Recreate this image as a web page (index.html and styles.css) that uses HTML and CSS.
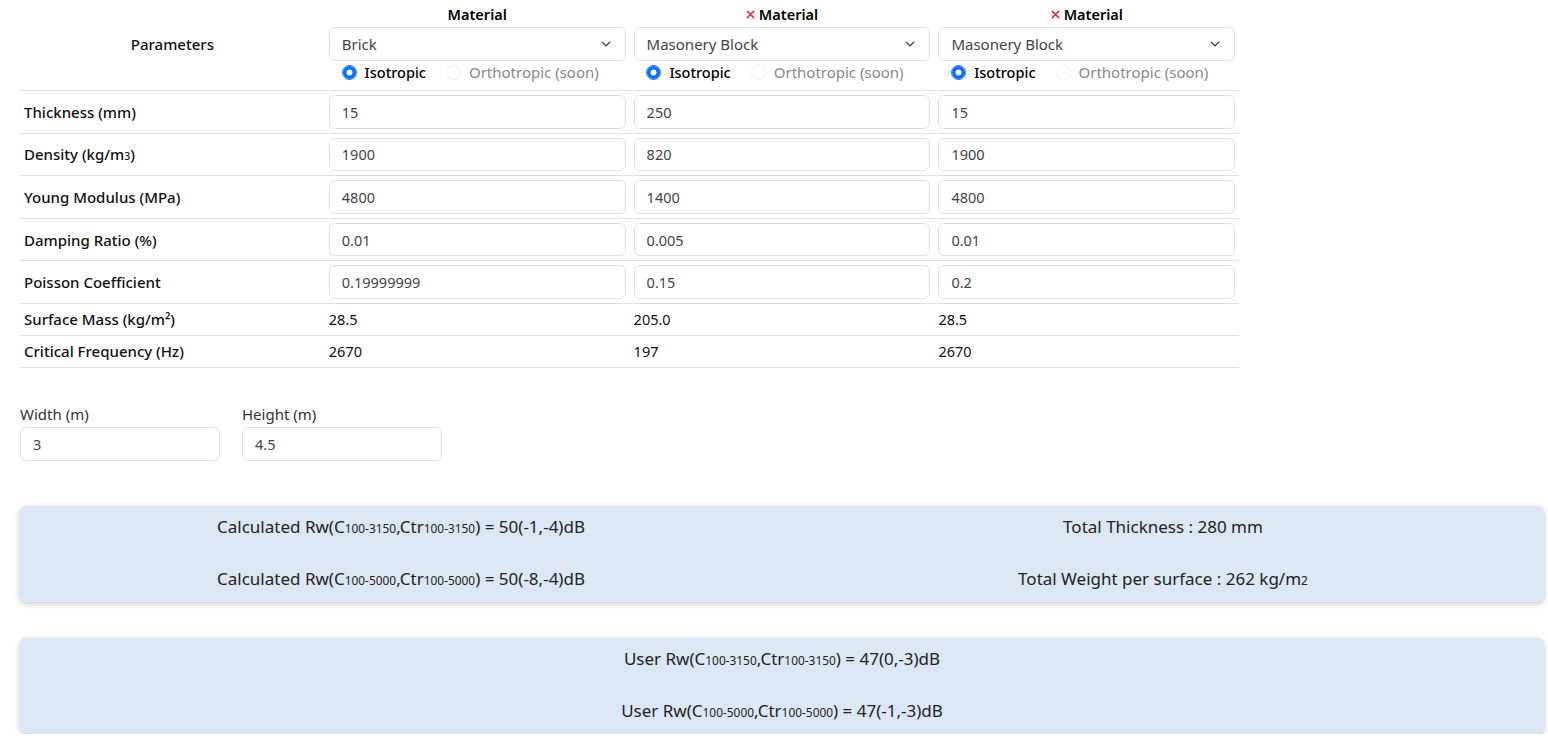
FILE: index.html
```html
<!DOCTYPE html>
<html>
<head>
<meta charset="utf-8">
<link rel="stylesheet" href="styles.css">
</head>
<body>
<div class="page">
  <table class="params">
    <tbody>
      <tr class="head-row">
        <td class="label-cell center">Parameters</td>
        <td>
          <div class="mat-title">Material</div>
          <div class="select-wrap">
            <select class="sel"><option>Brick</option></select>
            <svg class="chev" width="10" height="10" viewBox="0 0 16 16"><path d="M2 5l6 6 6-6" fill="none" stroke="#343a40" stroke-width="2.2" stroke-linecap="round" stroke-linejoin="round"/></svg>
          </div>
          <div class="radios">
            <label class="rad"><span class="dot on"></span>Isotropic</label>
            <label class="rad off"><span class="dot"></span>Orthotropic (soon)</label>
          </div>
        </td>
        <td>
          <div class="mat-title"><svg class="x" width="9" height="9" viewBox="0 0 10 10"><path d="M1.5 1.5l7 7M8.5 1.5l-7 7" stroke="#dc3545" stroke-width="1.8" stroke-linecap="round"/></svg>Material</div>
          <div class="select-wrap">
            <select class="sel"><option>Masonery Block</option></select>
            <svg class="chev" width="10" height="10" viewBox="0 0 16 16"><path d="M2 5l6 6 6-6" fill="none" stroke="#343a40" stroke-width="2.2" stroke-linecap="round" stroke-linejoin="round"/></svg>
          </div>
          <div class="radios">
            <label class="rad"><span class="dot on"></span>Isotropic</label>
            <label class="rad off"><span class="dot"></span>Orthotropic (soon)</label>
          </div>
        </td>
        <td>
          <div class="mat-title"><svg class="x" width="9" height="9" viewBox="0 0 10 10"><path d="M1.5 1.5l7 7M8.5 1.5l-7 7" stroke="#dc3545" stroke-width="1.8" stroke-linecap="round"/></svg>Material</div>
          <div class="select-wrap">
            <select class="sel"><option>Masonery Block</option></select>
            <svg class="chev" width="10" height="10" viewBox="0 0 16 16"><path d="M2 5l6 6 6-6" fill="none" stroke="#343a40" stroke-width="2.2" stroke-linecap="round" stroke-linejoin="round"/></svg>
          </div>
          <div class="radios">
            <label class="rad"><span class="dot on"></span>Isotropic</label>
            <label class="rad off"><span class="dot"></span>Orthotropic (soon)</label>
          </div>
        </td>
      </tr>
      <tr>
        <td class="label-cell">Thickness (mm)</td>
        <td><input class="inp" value="15"></td>
        <td><input class="inp" value="250"></td>
        <td><input class="inp" value="15"></td>
      </tr>
      <tr>
        <td class="label-cell">Density (kg/m<sub class="lo">3</sub>)</td>
        <td><input class="inp" value="1900"></td>
        <td><input class="inp" value="820"></td>
        <td><input class="inp" value="1900"></td>
      </tr>
      <tr>
        <td class="label-cell">Young Modulus (MPa)</td>
        <td><input class="inp" value="4800"></td>
        <td><input class="inp" value="1400"></td>
        <td><input class="inp" value="4800"></td>
      </tr>
      <tr>
        <td class="label-cell">Damping Ratio (%)</td>
        <td><input class="inp" value="0.01"></td>
        <td><input class="inp" value="0.005"></td>
        <td><input class="inp" value="0.01"></td>
      </tr>
      <tr>
        <td class="label-cell">Poisson Coefficient</td>
        <td><input class="inp" value="0.19999999"></td>
        <td><input class="inp" value="0.15"></td>
        <td><input class="inp" value="0.2"></td>
      </tr>
      <tr class="text-row">
        <td class="label-cell">Surface Mass (kg/m²)</td>
        <td>28.5</td>
        <td>205.0</td>
        <td>28.5</td>
      </tr>
      <tr class="text-row">
        <td class="label-cell">Critical Frequency (Hz)</td>
        <td>2670</td>
        <td>197</td>
        <td>2670</td>
      </tr>
    </tbody>
  </table>

  <div class="dims">
    <div class="dim">
      <label class="dim-label">Width (m)</label>
      <input class="inp" value="3">
    </div>
    <div class="dim">
      <label class="dim-label">Height (m)</label>
      <input class="inp" value="4.5">
    </div>
  </div>

  <div class="result two">
    <div class="col">
      <p>Calculated Rw(C<sub class="lo">100-3150</sub>,Ctr<sub class="lo">100-3150</sub>) = 50(-1,-4)dB</p>
      <p>Calculated Rw(C<sub class="lo">100-5000</sub>,Ctr<sub class="lo">100-5000</sub>) = 50(-8,-4)dB</p>
    </div>
    <div class="col">
      <p>Total Thickness : 280 mm</p>
      <p>Total Weight per surface : 262 kg/m<sub class="lo">2</sub></p>
    </div>
  </div>

  <div class="result one">
    <div class="col">
      <p>User Rw(C<sub class="lo">100-3150</sub>,Ctr<sub class="lo">100-3150</sub>) = 47(0,-3)dB</p>
      <p>User Rw(C<sub class="lo">100-5000</sub>,Ctr<sub class="lo">100-5000</sub>) = 47(-1,-3)dB</p>
    </div>
  </div>
</div>
</body>
</html>
```

FILE: styles.css
```css
* { box-sizing: border-box; }
html, body { margin: 0; padding: 0; background: #fff; }
body {
  font-family: "Noto Sans", "Open Sans", sans-serif;
  font-size: 15px;
  color: #212529;
}
.page { padding: 0 4px 0 20px; }

.params {
  width: 80%;
  border-collapse: collapse;
  table-layout: fixed;
}
.params td {
  padding: 4px;
  border-bottom: 1px solid #dee2e6;
  vertical-align: middle;
  width: 25%;
  font-size: 14.5px;
  font-weight: 400;
  color: #111;
}
.params td.label-cell {
  font-weight: 500;
  font-size: 15px;
  color: #111;
}
.params td.center { text-align: center; }
.params .head-row td { padding-top: 4px; padding-bottom: 7px; }
.params .text-row td { padding: 4px; line-height: 23px; }

.mat-title {
  display: flex;
  justify-content: center;
  align-items: center;
  gap: 4px;
  font-weight: 600;
  font-size: 14.5px;
  line-height: 20px;
  margin-bottom: 3px;
  color: #000;
}

.select-wrap { position: relative; }
.sel {
  -webkit-appearance: none;
  appearance: none;
  display: block;
  width: 100%;
  height: 34px;
  padding: 0 36px 0 12px;
  font-family: inherit;
  font-size: 15px;
  color: #444;
  background: #fff;
  border: 1px solid #dee2e6;
  border-radius: 6px;
}
.chev { position: absolute; right: 15px; top: 12px; }

.radios {
  display: flex;
  justify-content: center;
  gap: 20px;
  padding-right: 14px;
  height: 22px;
  align-items: center;
}
.rad {
  display: flex;
  align-items: center;
  gap: 8px;
  font-size: 14.5px;
  font-weight: 500;
  color: #000;
}
.rad.off { color: #888; font-weight: 400; font-size: 15px; }
.dot {
  width: 15px;
  height: 15px;
  border-radius: 50%;
  border: 1px solid #eef0f2;
  background: #fff;
  display: inline-block;
}
.dot.on {
  border-color: #0d6efd;
  box-shadow: inset 0 0 0 3.5px #0d6efd;
  background: #fff;
}

.inp {
  display: block;
  width: 100%;
  height: 33.6px;
  padding: 0 12px;
  font-family: inherit;
  font-size: 14.5px;
  color: #444;
  background: #fff;
  border: 1px solid #dee2e6;
  border-radius: 6px;
  outline: none;
}
.dims .inp { height: 34px; }

.lo { font-size: 0.7em; vertical-align: baseline; line-height: 0; }

.dims {
  display: flex;
  gap: 22px;
  margin-top: 37px;
}
.dim { width: 200px; }
.dim-label {
  display: block;
  font-size: 15px;
  line-height: 18px;
  margin-bottom: 4px;
  color: #333;
}

.result {
  background: #dce7f5;
  border-radius: 6px;
  box-shadow: 0 2px 6px rgba(0, 0, 0, 0.22);
  display: flex;
  padding: 9px 0 11px;
}
.result.two { margin-top: 45px; }
.result.one { margin-top: 36px; }
.result .col {
  flex: 1;
  display: flex;
  flex-direction: column;
  gap: 28px;
  align-items: center;
}
.result p {
  margin: 0;
  line-height: 24px;
  height: 24px;
  font-size: 17px;
  color: #222;
}
```
